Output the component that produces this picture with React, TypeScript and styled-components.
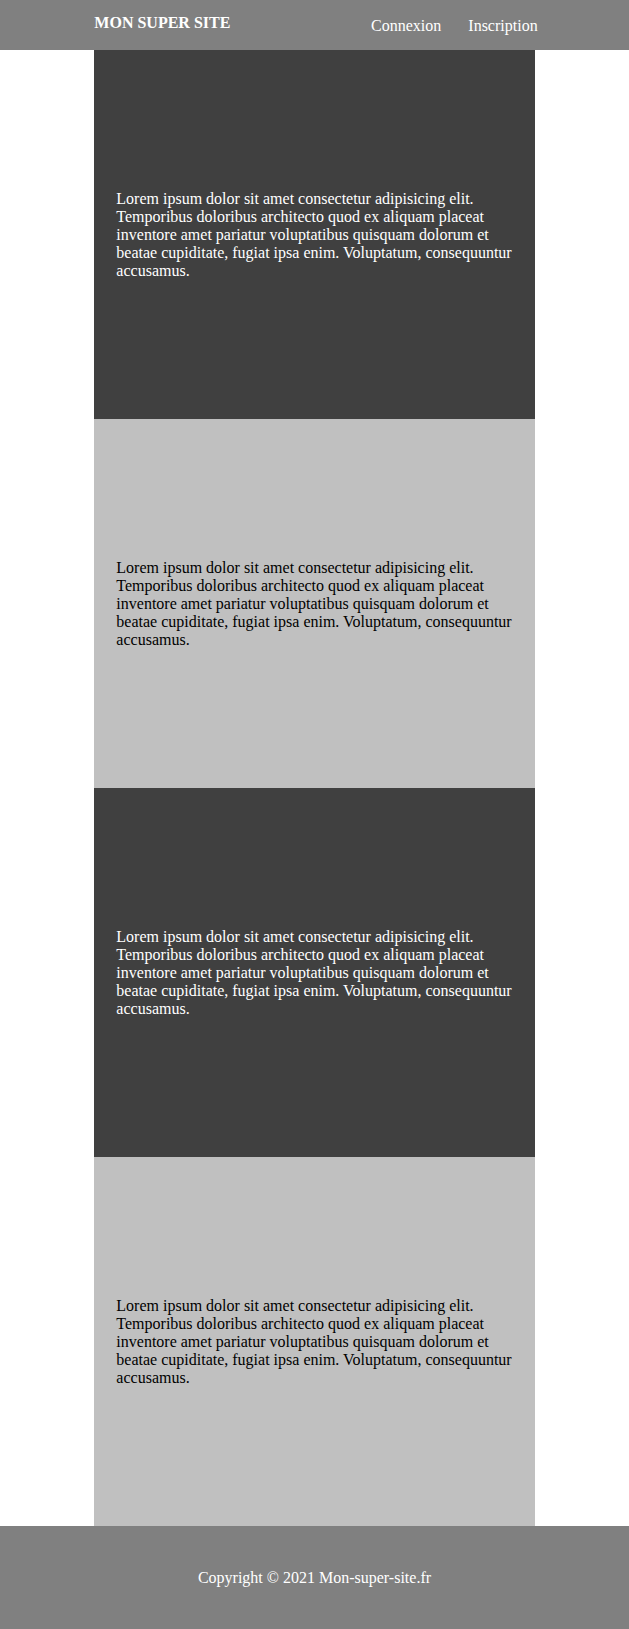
import React from "react";
import styled, { createGlobalStyle } from "styled-components";

const Global = createGlobalStyle`
  html, body { margin: 0; padding: 0; background: #ffffff; }
  body { font-family: "Liberation Serif", "Times New Roman", serif; font-size: 16px; }
  * { box-sizing: border-box; }
`;

const Header = styled.header`
  height: 50px;
  background: #808080;
  color: #ffffff;
`;

const HeaderInner = styled.div`
  width: 70%;
  margin: 0 auto;
  height: 100%;
  display: flex;
  justify-content: space-between;
  align-items: flex-start;
`;

const Brand = styled.div`
  font-weight: bold;
  font-size: 16px;
  padding-top: 14px;
  line-height: normal;
`;

const Nav = styled.nav`
  display: flex;
  gap: 27px;
  padding-top: 17px;
  margin-right: -3px;
`;

const NavLink = styled.a`
  color: #ffffff;
  text-decoration: none;
  font-size: 16px;
  cursor: pointer;
`;

const Main = styled.main`
  width: 70%;
  margin: 0 auto;
  display: flex;
  flex-direction: column;
`;

const Section = styled.section<{ $dark: boolean }>`
  height: 369px;
  display: flex;
  align-items: center;
  padding: 0 10px 0 22px;
  background: ${(p) => (p.$dark ? "#404040" : "#c0c0c0")};
  color: ${(p) => (p.$dark ? "#ffffff" : "#000000")};
`;

const Text = styled.p`
  margin: 0;
  font-size: 16px;
  line-height: normal;
`;

const Footer = styled.footer`
  height: 103px;
  background: #808080;
  color: #ffffff;
  display: flex;
  align-items: center;
  justify-content: center;
  font-size: 16px;
`;

const lorem =
  "Lorem ipsum dolor sit amet consectetur adipisicing elit. Temporibus doloribus architecto quod ex aliquam placeat inventore amet pariatur voluptatibus quisquam dolorum et beatae cupiditate, fugiat ipsa enim. Voluptatum, consequuntur accusamus.";

export default function App() {
  const sections = [true, false, true, false];
  return (
    <>
      <Global />
      <Header>
        <HeaderInner>
          <Brand>MON SUPER SITE</Brand>
          <Nav>
            <NavLink>Connexion</NavLink>
            <NavLink>Inscription</NavLink>
          </Nav>
        </HeaderInner>
      </Header>
      <Main>
        {sections.map((dark, i) => (
          <Section key={i} $dark={dark}>
            <Text>{lorem}</Text>
          </Section>
        ))}
      </Main>
      <Footer>Copyright © 2021 Mon-super-site.fr</Footer>
    </>
  );
}
